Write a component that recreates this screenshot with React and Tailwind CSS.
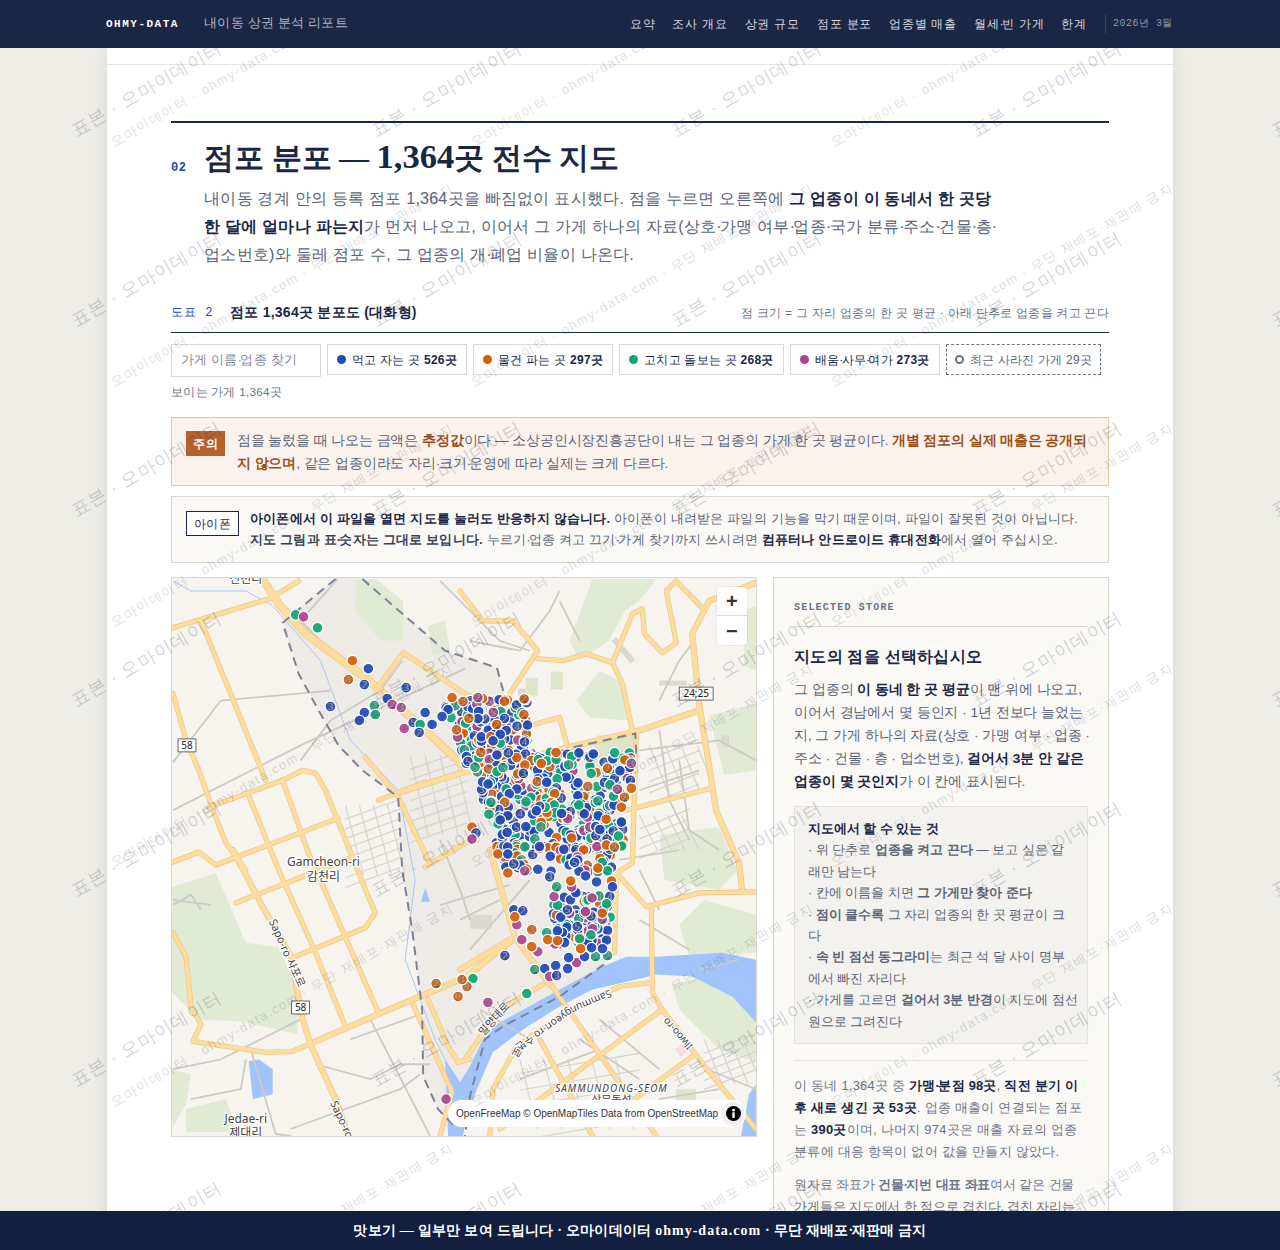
const NAV = ["요약", "조사 개요", "상권 규모", "점포 분포", "업종별 매출"];

const BLUE = "#2148b4";
const ORANGE = "#d55f05";
const GREEN = "#0fa47a";
const MAG = "#a9458c";
const COLORS = [BLUE, BLUE, BLUE, BLUE, ORANGE, ORANGE, GREEN, GREEN, MAG];

// 큰 길: [폭, 좌표]
const ROADS = [
  [7, "262,578 278,603 305,633 365,677 420,725 465,767"],
  [4, "172,627 268,598 298,580"],
  [4, "200,620 265,780"],
  [4, "172,693 185,740 198,770 212,810 225,843 245,870"],
  [4, "208,807 282,780 302,770 315,773 325,790 352,857 368,897 375,913 365,928 292,958"],
  [4, "172,862 198,852 215,865 338,818"],
  [4, "247,793 278,870 315,953 345,1027"],
  [4, "282,780 308,853 378,1013"],
  [4, "235,903 352,857"],
  [5, "232,850 262,907 292,960 300,1013 310,1045 335,1100 348,1137"],
  [5, "315,1042 382,1013 465,978 513,940"],
  [4, "172,933 185,957 190,1007 200,1025 192,1042 265,1053 292,1052 308,1045"],
  [4, "413,1005 452,1093 440,1137"],
  [4, "428,1000 448,1047 458,1063 470,1060"],
  [4, "365,757 398,797 428,860"],
  [4, "425,867 465,843 477,840"],
  [4, "378,800 425,782"],
  [4, "380,683 403,652 465,693 510,715"],
  [4, "460,590 483,620 513,620 538,650 510,693 507,703"],
  [4, "538,658 563,660 587,653 613,662 633,613 643,608 645,633 663,652 677,642 667,590 677,580 703,607"],
  [4, "613,662 623,683 633,730"],
  [5, "757,582 710,600 693,633 700,703 717,810 740,863 743,890"],
  [5, "700,710 640,730 527,757 460,773 400,792"],
  [4, "522,727 560,717 567,743"],
  [4, "637,733 633,863 617,873 615,953"],
  [4, "627,810 712,788"],
  [4, "617,873 647,907 700,893 757,892"],
  [4, "652,907 653,993 663,1010 700,1060 757,1130"],
  [4, "663,1010 540,1100 500,1130"],
  [4, "653,983 620,987 570,1010 517,1047 493,1090 490,1137"],
  [4, "550,983 657,1137"],
  [4, "540,1040 593,1137"],
  [4, "693,1057 617,1113"],
  [5, "490,850 515,937 460,970"],
  [5, "515,937 550,985"],
  [4, "543,985 500,1010 465,1060"],
];

// 골목길
const MINOR = [
  "172,810 300,745 465,668", "172,762 220,700 330,690", "300,760 330,720 380,690 402,660",
  "337,578 300,620 330,650 365,680", "440,580 500,640 530,650", "470,640 520,650 550,610 560,590",
  "560,600 580,640", "660,700 680,660 695,640", "640,750 720,740 757,760", "680,760 690,830 720,850",
  "640,790 700,770", "660,730 670,800 690,840", "620,860 680,850", "640,920 690,950", "640,870 660,910",
  "480,1010 530,1040", "580,1040 640,1080", "600,1020 660,1070", "520,1080 600,1050", "700,970 740,960",
  "708,1070 757,1090", "660,1100 720,1090", "172,1070 220,1060 300,1020", "190,1100 240,1090 245,1060",
  "250,1050 275,1135 290,1137", "290,1130 400,1090 420,1075", "315,1065 370,1080 400,1065 430,1065",
  "370,1020 430,1137", "350,1040 420,1015", "172,905 190,895 200,910", "172,900 210,905",
  "440,840 460,890 470,920", "460,920 500,900", "440,905 510,885", "470,950 530,880",
];

// 동 경계 점선
const BOUNDARY = [
  "335,578 282,622 298,673 317,708 338,745 362,770 398,797 402,870 412,930 422,1010 423,1077 438,1110 455,1128",
  "362,578 445,650 497,667 508,707 537,755 636,733 637,757 612,853 610,920 607,963 560,997 503,1027 485,1040 470,1097 465,1137",
];

const GREENS = [
  "355,578 375,578 403,600 403,640 380,640 355,610",
  "428,625 445,620 450,650 432,655",
  "593,578 657,578 640,600 625,610 610,640 580,660 570,640",
  "577,700 600,670 620,680 628,720 590,717",
  "745,610 757,605 757,670 745,665",
  "710,715 757,703 757,770 725,775",
  "660,835 720,827 738,870 720,890 665,880",
  "680,925 705,900 757,915 757,953 690,957",
  "673,985 705,977 733,997 757,1023 757,1063 720,1050 680,1010",
  "171,887 215,873 245,943 278,947 298,993 297,1035 242,1022 198,1020 171,993",
  "171,1070 190,1075 185,1105 171,1130",
  "185,1110 225,1100 237,1133 185,1133",
];

// 따로 떨어진 점: [x, y, 색, 숫자]
const SINGLES = [
  [295, 614, GREEN], [303, 616, MAG], [317, 627, GREEN], [352, 660, ORANGE], [368, 668, BLUE], [348, 679, ORANGE, 4],
  [364, 684, BLUE, 2], [406, 687, BLUE, 3], [330, 706, BLUE, 3], [387, 698, BLUE], [392, 704, MAG, 2], [401, 707, MAG, 3],
  [374, 705, GREEN, 2], [375, 714, GREEN], [364, 712, BLUE], [359, 720, BLUE], [404, 728, MAG], [413, 722, BLUE, 5],
  [420, 724, GREEN], [419, 732, BLUE, 2], [425, 712, BLUE], [432, 724, BLUE], [452, 697, ORANGE], [448, 709, BLUE],
  [442, 716, BLUE], [463, 701, ORANGE, 3], [478, 697, MAG, 2], [505, 956, BLUE, 2], [535, 970, GREEN, 2], [545, 969, BLUE],
  [556, 966, BLUE], [568, 969, BLUE], [577, 963, MAG], [569, 958, BLUE], [585, 957, BLUE], [596, 957, GREEN, 2], [608, 956, GREEN, 2],
  [550, 977, MAG], [557, 976, BLUE, 3], [473, 979, GREEN], [467, 987, ORANGE, 4], [462, 980, ORANGE, 3], [527, 994, GREEN],
  [488, 1003, MAG], [458, 997, ORANGE, 9], [436, 984, ORANGE, 2], [446, 1100, MAG], [538, 952, MAG], [532, 947, ORANGE],
  [522, 940, MAG], [532, 930, ORANGE, 3], [547, 933, GREEN, 2], [548, 940, ORANGE], [558, 941, ORANGE], [580, 939, GREEN],
  [581, 949, ORANGE], [592, 948, BLUE], [603, 949, BLUE], [525, 871, MAG, 2], [506, 867, BLUE], [514, 864, BLUE, 5],
  [508, 873, ORANGE], [498, 854, ORANGE], [508, 854, BLUE], [572, 887, MAG], [571, 881, ORANGE], [557, 887, GREEN, 2],
  [550, 877, BLUE, 3], [586, 876, BLUE], [597, 882, BLUE], [612, 881, ORANGE], [613, 887, BLUE], [608, 768, ORANGE, 2],
  [632, 763, MAG, 3], [631, 781, GREEN], [631, 780, BLUE, 2], [632, 788, ORANGE], [625, 797, ORANGE, 2], [614, 796, GREEN],
  [618, 789, MAG, 2], [622, 807, ORANGE], [622, 822, BLUE], [619, 836, GREEN], [607, 845, ORANGE], [615, 847, ORANGE, 2],
  [472, 827, ORANGE], [476, 833, BLUE, 3], [472, 839, MAG], [514, 910, BLUE], [523, 911, BLUE, 2], [517, 925, MAG], [515, 917, ORANGE],
];

// 점이 몰린 구역: [x0, y0, x1, y1, 개수, 왼쪽 기울기]
const CLUSTERS = [
  [442, 698, 528, 764, 190, 0.35],
  [472, 752, 632, 800, 200, 0.15],
  [486, 800, 624, 848, 190, 0.2],
  [500, 846, 612, 872, 70, 0.2],
  [552, 892, 612, 945, 95, 0],
];

const makeDots = () => {
  let seed = 1364;
  const rnd = () => {
    seed = (seed * 16807) % 2147483647;
    return seed / 2147483647;
  };
  const dots = [];
  CLUSTERS.forEach(([x0, y0, x1, y1, n, slant]) => {
    for (let i = 0; i < n; i++) {
      const y = y0 + rnd() * (y1 - y0);
      const x = x0 + (y - y0) * slant + rnd() * (x1 - x0 - (y - y0) * slant);
      const num = rnd() < 0.35 ? 2 + Math.floor(rnd() * 4) : null;
      dots.push([x, y, COLORS[Math.floor(rnd() * COLORS.length)], num]);
    }
  });
  return dots;
};

const DOTS = [...makeDots(), ...SINGLES];

const gridLines = (x0, y0, x1, y1, step) => {
  const out = [];
  for (let x = x0; x < x1; x += step) out.push(`${x},${y0} ${x + 18},${y1}`);
  for (let y = y0; y < y1; y += step * 0.7) out.push(`${x0},${y + 14} ${x1},${y - 6}`);
  return out;
};

const GRIDS = [
  ...gridLines(410, 755, 468, 835, 15),
  ...gridLines(345, 805, 400, 875, 14),
  ...gridLines(650, 745, 700, 790, 16),
  ...gridLines(640, 815, 690, 850, 14),
  ...gridLines(520, 1060, 640, 1130, 24),
  ...gridLines(705, 1040, 757, 1085, 13),
];

// 가운뎃점은 폭이 좁게 찍힌다
const D = () => <span className="tracking-[-1.6px]">·</span>;

const Label = ({ x, y, size = 12, rotate, children, className = "" }) => (
  <text
    x={x}
    y={y}
    fontSize={size}
    textAnchor="middle"
    fill="#444"
    stroke="#fff"
    strokeWidth="2.5"
    paintOrder="stroke"
    transform={rotate ? `rotate(${rotate} ${x} ${y})` : undefined}
    className={className}
  >
    {children}
  </text>
);

const Shield = ({ x, y, w = 18, children }) => (
  <g>
    <rect x={x - w / 2} y={y - 6.5} width={w} height={13} fill="#fff" stroke="#444" strokeWidth="0.8" />
    <text x={x} y={y + 3.5} fontSize="10" textAnchor="middle" fill="#222">
      {children}
    </text>
  </g>
);

const MapDrawing = () => (
  <svg viewBox="171 577 586 560" className="block h-full w-full font-['Noto_Sans','Noto_Sans_CJK_KR',sans-serif] tracking-normal">
    <rect x="171" y="577" width="586" height="560" fill="#f7f4ef" />
    <polygon
      points="335,577 362,577 445,650 497,667 508,707 537,755 636,733 637,757 612,853 610,920 607,963 560,997 503,1027 485,1040 470,1097 455,1128 438,1110 423,1077 422,1010 412,930 402,870 398,797 362,770 338,745 317,708 298,673 282,622"
      fill="#eeebe7"
    />
    {GREENS.map((p) => (
      <polygon key={p} points={p} fill="#e1ebd4" />
    ))}
    <polygon
      points="757,960 723,953 657,957 627,957 603,967 560,990 493,1027 483,1040 470,1067 460,1083 445,1060 448,1137 463,1137 467,1117 477,1090 493,1053 523,1030 560,1007 593,990 637,980 657,975 693,977 733,997 757,1023"
      fill="#a0c4fb"
    />
    <polygon points="248,1062 258,1060 272,1070 272,1095 252,1100" fill="#a0c4fb" />
    <polygon points="425,888 430,902 421,902" fill="#a0c4fb" />
    <polygon points="750,1095 757,1085 757,1137 742,1137" fill="#a0c4fb" />
    <polyline points="172,580 190,590 245,590 272,605 320,660 350,740 398,790 415,880 405,960 435,1040 445,1060" fill="none" stroke="#a9c8f5" strokeWidth="1" />

    <g fill="#dcd9d3">
      <rect x="518" y="688" width="8" height="12" />
      <rect x="522" y="710" width="8" height="14" />
      <rect x="660" y="680" width="28" height="5" />
      <rect x="612" y="640" width="6" height="30" transform="rotate(-40 612 640)" />
      <rect x="722" y="735" width="8" height="12" />
      <rect x="470" y="915" width="22" height="14" />
    </g>
    <g fill="#dde4c8">
      <rect x="526" y="677" width="12" height="18" />
      <rect x="551" y="671" width="12" height="18" />
      <polygon points="597,735 636,733 634,765 590,770" />
      <rect x="677" y="1090" width="20" height="18" />
    </g>
    <rect x="676" y="1050" width="14" height="9" fill="#f8dbe4" transform="rotate(-35 676 1050)" />

    <g fill="none" stroke="#d6d3ce" strokeWidth="1.2">
      {GRIDS.map((p, i) => (
        <polyline key={i} points={p} />
      ))}
    </g>
    <g fill="none" stroke="#cdcac5" strokeWidth="1.8" strokeLinejoin="round">
      {MINOR.map((p) => (
        <polyline key={p} points={p} />
      ))}
    </g>

    <g fill="none" strokeLinejoin="round" strokeLinecap="round">
      {ROADS.map(([w, p]) => (
        <polyline key={p} points={p} stroke="#eec283" strokeWidth={w + 1.2} />
      ))}
      {ROADS.map(([w, p]) => (
        <polyline key={p} points={p} stroke="#fcdd9e" strokeWidth={w} />
      ))}
    </g>

    <g fill="none" stroke="#7b8296" strokeWidth="2" strokeDasharray="9 6">
      {BOUNDARY.map((p) => (
        <polyline key={p} points={p} />
      ))}
    </g>

    <Label x={323} y={866} size={12}>Gamcheon-ri</Label>
    <Label x={323} y={881} size={12}>감천리</Label>
    <Label x={245} y={1124} size={12}>Jedae-ri</Label>
    <Label x={245} y={1138} size={12}>제대리</Label>
    <Label x={245} y={582} size={12}>신천리</Label>
    <Label x={283} y={955} size={11} rotate={66}>Sapo-ro 사포로</Label>
    <Label x={338} y={1122} size={11} rotate={65}>Sapo-ro</Label>
    <Label x={612} y={1093} size={10} className="italic tracking-[1px]">SAMMUNDONG-SEOM</Label>
    <Label x={612} y={1105} size={11}>삼문동섬</Label>
    <Label x={497} y={1022} size={11} rotate={-48}>밀양대로</Label>
    <Label x={681} y={1032} size={10} rotate={228}>Ilwoo-ro</Label>
    <path id="riverRoad" d="M610,990 L570,1008 L517,1045 L493,1088 L489,1110" fill="none" />
    <text fontSize="10.5" fill="#444" stroke="#fff" strokeWidth="2.5" paintOrder="stroke">
      <textPath href="#riverRoad">Sammungyeon-ro 수변로</textPath>
    </text>
    <Shield x={186} y={745}>58</Shield>
    <Shield x={300} y={1008}>58</Shield>
    <Shield x={697} y={693} w={34}>24;25</Shield>

    {DOTS.map(([x, y, color, num], i) => (
      <g key={i}>
        <circle cx={x} cy={y} r="5.4" fill={color} fillOpacity="0.92" stroke="#fff" strokeWidth="1.2" />
        {num && (
          <text x={x} y={y + 3.5} fontSize="9.5" textAnchor="middle" fill="#fff" stroke="#333" strokeWidth="0.3">
            {num}
          </text>
        )}
      </g>
    ))}
  </svg>
);

const Chip = ({ color, children, count }) => (
  <button className="flex h-[31px] items-center gap-[6px] whitespace-nowrap border border-[#dcd8cf] bg-white px-[9px] text-[12px] text-[#1a2744]">
    <span className={`h-[9px] w-[9px] rounded-full ${color}`} />
    <span>
      {children} <b className="font-bold">{count}</b>
    </span>
  </button>
);

const Watermark = () => {
  const big = [];
  for (let i = 0; i < 5; i++) for (let j = 0; j < 7; j++) big.push([147 + 300 * i, 89 + 190 * j]);
  return (
    <div className="pointer-events-none absolute inset-0 z-20 overflow-hidden">
      {big.map(([x, y]) => (
        <span
          key={`${x}-${y}`}
          style={{ left: x, top: y }}
          className="absolute -translate-x-1/2 -translate-y-1/2 -rotate-[30deg] whitespace-nowrap text-[18px] tracking-[1px] text-[#1a2744]/20"
        >
          표본 · 오마이데이터
        </span>
      ))}
    </div>
  );
};

const SheetMark = () => {
  const small = [];
  for (let i = 0; i < 3; i++) for (let j = 0; j < 6; j++) small.push([175 + 360 * i, -3 + 240 * j]);
  return (
    <div className="pointer-events-none absolute inset-0 z-10 overflow-hidden">
      {small.map(([x, y]) => (
        <span
          key={`${x}-${y}`}
          style={{ left: x, top: y }}
          className="absolute -translate-x-1/2 -translate-y-1/2 -rotate-[30deg] whitespace-nowrap text-[13px] tracking-[1.6px] text-[#1a2744]/[0.18]"
        >
          오마이데이터 · ohmy-data.com · 무단 재배포·재판매 금지
        </span>
      ))}
    </div>
  );
};

export default function App() {
  return (
    <div className="relative h-[1250px] overflow-hidden bg-[#edece6] font-['Liberation_Sans',sans-serif] tracking-[0.25px] text-[#1a2744]">
      <header className="relative z-30 flex h-12 items-center bg-[#1a2744] pl-[106px] pr-[107px]">
        <span className="w-[98px] font-['Liberation_Mono',monospace] text-[11px] font-bold tracking-[1.5px] text-white">OHMY-DATA</span>
        <span className="text-[12.7px] text-[#aeb6c6]">내이동 상권 분석 리포트</span>
        <nav className="ml-auto flex items-center gap-[17px] text-[12.4px] tracking-[0.75px] text-[#d5d9e2]">
          {NAV.map((n) => (
            <span key={n}>{n}</span>
          ))}
          <span>월세<D />빈 가게</span>
          <span>한계</span>
          <span className="ml-[1px] border-l border-[#3c4866] pl-[7px] font-['Liberation_Mono',monospace] text-[10px] leading-[18px] tracking-[0.5px] text-[#8d97ab]">2026년 3월</span>
        </nav>
      </header>

      <main className="relative mx-auto h-[1202px] w-[1066px] overflow-hidden bg-white shadow-[0_0_14px_rgba(40,40,30,0.1)]">
        <SheetMark />
        <div className="h-[17px] border-b border-[#e8e5de]" />
        <div className="px-16 pt-[56px]">
          <section className="border-t-2 border-[#1a2744]">
            <div className="mt-[11px] flex items-start">
              <span className="mt-[25px] w-[33px] font-['Liberation_Mono',monospace] text-[12px] font-bold leading-[18px] tracking-[0.5px] text-[#2148b4]">02</span>
              <h2 className="font-['Liberation_Serif',serif] text-[30px] font-bold leading-[44px] tracking-normal">
                점포 분포 — <span className="text-[34.5px]">1,364</span>곳 전수 지도
              </h2>
            </div>
            <p className="ml-[33px] mt-[5px] whitespace-nowrap text-[16px] leading-[28px] text-[#5a6478]">
              내이동 경계 안의 등록 점포 1,364곳을 빠짐없이 표시했다. 점을 누르면 오른쪽에 <b className="font-bold text-[#1a2744]">그 업종이 이 동네서 한 곳당<br />한 달에 얼마나 파는지</b>가 먼저 나오고, 이어서 그 가게 하나의 자료(상호<D />가맹 여부<D />업종<D />국가 분류<D />주소<D />건물<D />층<D /><br />업소번호)와 둘레 점포 수, 그 업종의 개<D />폐업 비율이 나온다.
            </p>
          </section>

          <div className="mt-[33px] flex items-center border-b border-[#1a2744] pb-[9px]">
            <span className="w-[59px] font-['Liberation_Mono',monospace] text-[12px] tracking-[1px] text-[#2148b4]">도표 2</span>
            <b className="text-[14px] font-bold">점포 1,364곳 분포도 (대화형)</b>
            <span className="ml-auto text-[12px] text-[#6b7386]">점 크기 = 그 자리 업종의 한 곳 평균 · 아래 단추로 업종을 켜고 끈다</span>
          </div>

          <div className="mt-[11px] flex items-start gap-[6px]">
            <div className="flex h-[33px] w-[150px] items-center border border-[#dcd8cf] bg-white px-[9px] text-[12.6px] text-[#808898]">
              <span>가게 이름<D />업종 찾기</span>
            </div>
            <Chip color="bg-[#2148b4]" count="526곳">먹고 자는 곳</Chip>
            <Chip color="bg-[#d55f05]" count="297곳">물건 파는 곳</Chip>
            <Chip color="bg-[#0fa47a]" count="268곳">고치고 돌보는 곳</Chip>
            <Chip color="bg-[#a9458c]" count="273곳">배움<D />사무<D />여가</Chip>
            <button className="flex h-[31px] items-center gap-[6px] whitespace-nowrap border border-dashed border-[#6b7386] px-[8px] text-[12px] text-[#5a6478]">
              <span className="h-[9px] w-[9px] rounded-full border-2 border-[#6b7386]" />
              최근 사라진 가게 29곳
            </button>
          </div>
          <p className="mt-[6px] text-[11.7px] leading-[18px] text-[#6b7386]">보이는 가게 1,364곳</p>

          <div className="mt-[16px] flex h-[69px] items-start gap-[12px] border border-[#e4c9a8] bg-[#faf2ec] px-[14px] pt-[11px]">
            <span className="mt-[2px] flex h-[25px] w-[39px] shrink-0 items-center justify-center bg-[#b5622c] text-[12px] font-bold text-white">주의</span>
            <p className="whitespace-nowrap text-[13.6px] leading-[23px] tracking-[-0.12px] text-[#5a6478]">
              점을 눌렀을 때 나오는 금액은 <b className="font-bold text-[#9a4f16]">추정값</b>이다 — 소상공인시장진흥공단이 내는 그 업종의 가게 한 곳 평균이다. <b className="font-bold text-[#9a4f16]">개별 점포의 실제 매출은 공개되<br />지 않으며</b>, 같은 업종이라도 자리<D />크기<D />운영에 따라 실제는 크게 다르다.
            </p>
          </div>

          <div className="mt-[10px] flex h-[67px] items-start gap-[11px] border border-[#dcd8cf] bg-[#faf9f6] px-[14px] pt-[11px]">
            <span className="mt-[3px] flex h-[25px] w-[53px] shrink-0 items-center justify-center border border-[#1a2744] bg-white text-[12px] font-medium">아이폰</span>
            <p className="whitespace-nowrap text-[12.9px] leading-[21px] tracking-[0.2px] text-[#5a6478]">
              <b className="font-bold text-[#1a2744]">아이폰에서 이 파일을 열면 지도를 눌러도 반응하지 않습니다.</b> 아이폰이 내려받은 파일의 기능을 막기 때문이며, 파일이 잘못된 것이 아닙니다.<br />
              <b className="font-bold text-[#1a2744]/90">지도 그림과 표<D />숫자는 그대로 보입니다.</b> 누르기<D />업종 켜고 끄기<D />가게 찾기까지 쓰시려면 <b className="font-bold text-[#1a2744]">컴퓨터나 안드로이드 휴대전화</b>에서 열어 주십시오.
            </p>
          </div>

          <div className="mt-[14px] flex items-start gap-4">
            <div className="relative h-[560px] w-[586px] shrink-0 overflow-hidden border border-[#dcd8cf]">
              <MapDrawing />
              <div className="absolute right-[9px] top-[9px] flex w-[30px] flex-col rounded-[4px] bg-white shadow-[0_0_0_1px_rgba(0,0,0,0.05)]">
                <div className="flex h-[29px] items-center justify-center border-b border-[#ddd] text-[20px] font-bold leading-none text-[#333]">+</div>
                <div className="flex h-[29px] items-center justify-center text-[20px] font-bold leading-none text-[#333]">−</div>
              </div>
              <div className="absolute bottom-[9px] right-[10px] flex h-[27px] w-[298px] items-center justify-between whitespace-nowrap rounded-[14px] bg-white pl-[8px] pr-[1px] font-['Liberation_Sans',sans-serif] text-[10px] tracking-normal text-[#333]">
                <span>OpenFreeMap © OpenMapTiles Data from OpenStreetMap</span>
                <span className="flex h-[24px] w-[24px] shrink-0 items-center justify-center rounded-full bg-[#f0f0f0]">
                  <svg viewBox="0 0 20 20" className="h-[15px] w-[15px]">
                    <circle cx="10" cy="10" r="10" fill="#000" />
                    <rect x="8.4" y="8.4" width="3.2" height="7.5" fill="#fff" />
                    <circle cx="10" cy="5.5" r="1.8" fill="#fff" />
                  </svg>
                </span>
              </div>
            </div>

            <aside className="w-[336px] border border-[#dcd8cf] bg-[#faf9f6] px-5 pb-8 pt-[21px]">
              <div className="border-b border-[#dcd8cf] pb-[9px] font-['Liberation_Mono',monospace] text-[10px] font-bold leading-[18px] tracking-[1.2px] text-[#6b7386]">SELECTED STORE</div>
              <h3 className="mt-[18px] text-[16px] font-bold leading-[24px]">지도의 점을 선택하십시오</h3>
              <p className="mt-[9px] whitespace-nowrap text-[13.7px] leading-[23px] tracking-[-0.07px] text-[#5a6478]">
                그 업종의 <b className="font-bold text-[#1a2744]">이 동네 한 곳 평균</b>이 맨 위에 나오고,<br />
                이어서 경남에서 몇 등인지 · 1년 전보다 늘었는<br />
                지, 그 가게 하나의 자료(상호 · 가맹 여부 · 업종 ·<br />
                주소 · 건물 · 층 · 업소번호), <b className="font-bold text-[#1a2744]">걸어서 3분 안 같은<br />
                업종이 몇 곳인지</b>가 이 칸에 표시된다.
              </p>
              <div className="mt-[13px] whitespace-nowrap border border-[#e6e3dc] bg-[#f3f2ee] px-[13px] pb-[10px] pt-[12px] text-[12.6px] leading-[21.4px] tracking-normal text-[#5a6478]">
                <b className="font-bold text-[#1a2744]">지도에서 할 수 있는 것</b>
                <br />· 위 단추로 <b className="font-bold">업종을 켜고 끈다</b> — 보고 싶은 갈<br />래만 남는다
                <br />· 칸에 이름을 치면 <b className="font-bold">그 가게만 찾아 준다</b>
                <br />· <b className="font-bold">점이 클수록</b> 그 자리 업종의 한 곳 평균이 크<br />다
                <br />· <b className="font-bold">속 빈 점선 동그라미</b>는 최근 석 달 사이 명부<br />에서 빠진 자리다
                <br />· 가게를 고르면 <b className="font-bold">걸어서 3분 반경</b>이 지도에 점선<br />원으로 그려진다
              </div>
              <div className="mt-[16px] whitespace-nowrap border-t border-[#e6e3dc] pt-[14px] text-[12.9px] leading-[22px] text-[#6b7386]">
                이 동네 1,364곳 중 <b className="font-bold text-[#1a2744]">가맹<D />분점 98곳</b>, <b className="font-bold text-[#1a2744]">직전 분기 이<br />후 새로 생긴 곳 53곳</b>. 업종 매출이 연결되는 점포<br />는 <b className="font-bold text-[#1a2744]">390곳</b>이며, 나머지 974곳은 매출 자료의 업종<br />분류에 대응 항목이 없어 값을 만들지 않았다.
              </div>
              <p className="mt-[11px] whitespace-nowrap text-[12.9px] leading-[22px] tracking-[-0.15px] text-[#6b7386]">
                원자료 좌표가 <b className="font-bold">건물<D />지번 대표 좌표</b>여서 같은 건물<br />가게들은 지도에서 한 점으로 겹친다. 겹친 자리는<br />숫자로 표시한다.
              </p>
            </aside>
          </div>
        </div>
      </main>

      <Watermark />

      <footer className="absolute inset-x-0 bottom-0 z-30 flex h-[39px] items-center justify-center bg-[#121f3f] font-['Liberation_Serif',serif] text-[14px] font-bold text-white">
        <span>맛보기 — 일부만 보여 드립니다 · 오마이데이터 <span className="tracking-[1px]">ohmy-data.com</span> · 무단 재배포<D />재판매 금지</span>
      </footer>
    </div>
  );
}
